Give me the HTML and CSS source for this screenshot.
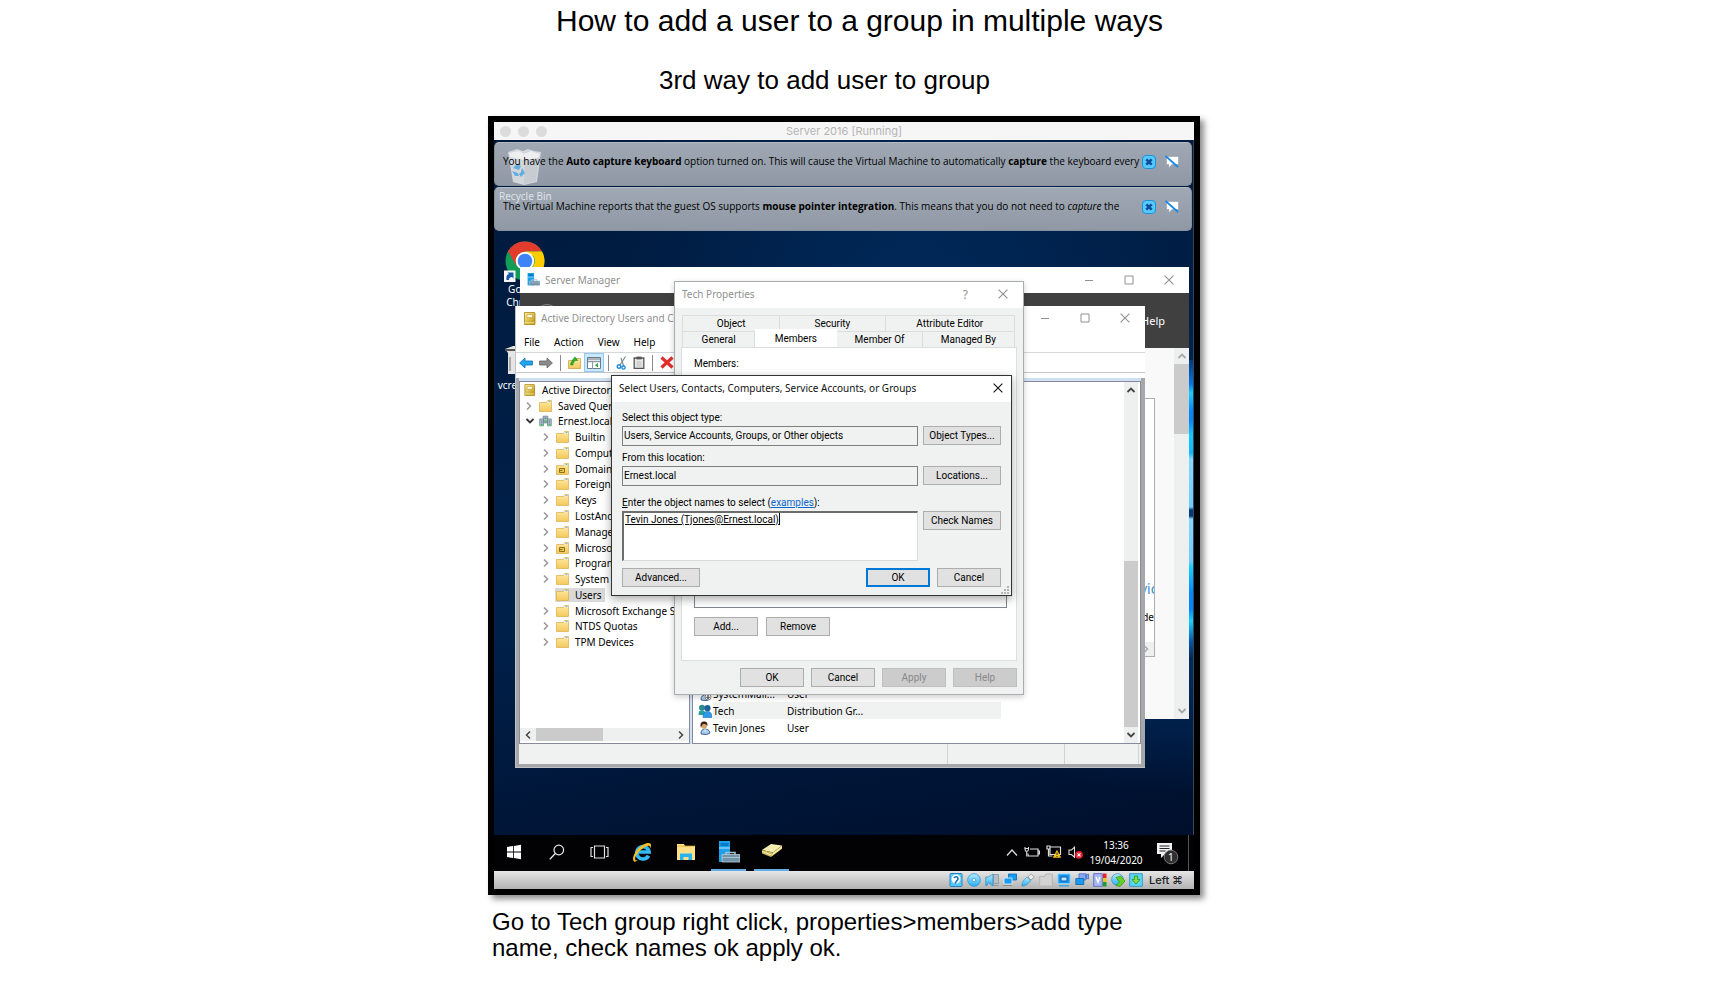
FILE: index.html
```html
<!DOCTYPE html>
<html lang="en">
<head>
<meta charset="utf-8">
<title>How to add a user to a group in multiple ways</title>
<link rel="stylesheet" href="styles.css">
</head>
<body>
<svg class="defs" aria-hidden="true">
  <linearGradient id="gold" x1="0" y1="0" x2="0" y2="1"><stop offset="0" stop-color="#ffe9a0"/><stop offset="1" stop-color="#f3c95c"/></linearGradient>
  <linearGradient id="book" x1="0" y1="0" x2="1" y2="1"><stop offset="0" stop-color="#fff3a0"/><stop offset="1" stop-color="#b58c06"/></linearGradient>
  <linearGradient id="aqua" x1="0" y1="0" x2="0" y2="1"><stop offset="0" stop-color="#b8ecff"/><stop offset="1" stop-color="#25aef5"/></linearGradient>
  <symbol id="folder" viewBox="0 0 13 12"><path d="M.5 2.5h7l1-2h4v11H.5z" fill="url(#gold)" stroke="#d9ac4a" stroke-width=".7"/><path d="M8.5 1h3.6v1.4H8.5z" fill="#fff"/><path d="M9.5 1.1h2v1h-2z" fill="#58a8d8"/></symbol>
  <symbol id="ou" viewBox="0 0 13 12"><use href="#folder"/><path d="M3.5 5.5h5v4h-5zM3.5 7.5h3" fill="#e9c75a" stroke="#8d7216"/></symbol>
  <symbol id="console" viewBox="0 0 12 13"><path d="M1 .5h10l.5 1v11H1z" fill="url(#book)" stroke="#a88413" stroke-width=".8"/><path d="M3.400 2.600h5.700v3H3.400z" fill="#fffbe0" stroke="#b89b30" stroke-width=".6"/><path d="M1 10.800h10" stroke="#f6e283"/></symbol>
  <symbol id="right" viewBox="0 0 8 10"><path d="M2 1.5 5.5 5 2 8.5" fill="none" stroke="currentColor" stroke-width="1.5"/></symbol>
  <symbol id="down" viewBox="0 0 10 8"><path d="M1.5 2 5 5.5 8.5 2" fill="none" stroke="currentColor" stroke-width="1.8"/></symbol>
  <symbol id="cross" viewBox="0 0 10 10"><path d="m.6.6 8.8 8.8M9.4.6.6 9.4" fill="none" stroke="currentColor" stroke-width="1.1"/></symbol>
  <symbol id="box" viewBox="0 0 10 10"><path d="M1 1h8v8H1z" fill="none" stroke="currentColor"/></symbol>
  <symbol id="min" viewBox="0 0 10 10"><path d="M1 5.5h8" stroke="currentColor"/></symbol>
  <symbol id="domain" viewBox="0 0 14 12"><path d="M4.5.8h5V7h-5z" fill="#a9bcc8" stroke="#62798a" stroke-width=".8"/><path d="M.8 3.8h4v7.4h-4zM9.2 3.8h4v7.4h-4z" fill="#b9cad5" stroke="#62798a" stroke-width=".8"/><path d="M5.2 8h3.6M1.8 6h2M1.8 8h2M10.2 6h2M10.2 8h2M5.8 3h2.4" stroke="#496273" stroke-width=".8"/><path d="M2 10h2M10.3 10h2M6 6.2h2" stroke="#1ed52c" stroke-width="1.4"/></symbol>
  <symbol id="server" viewBox="0 0 22 22"><path d="M1 0h11v21H1z" fill="#1ba0ea"/><path d="M2.5 2h8v3h-8z" fill="#0679c9"/><path d="M1 7h11" stroke="#bfe6ff"/><path d="M8 14v-2.5h9V14" fill="none" stroke="#a9bfcd" stroke-width="1.6"/><path d="M4 13.5h18V21H4z" fill="#7194a9" stroke="#b8ccd8" stroke-width=".8"/><path d="M4 16.5h18" stroke="#b8ccd8" stroke-width=".8"/></symbol>
  <symbol id="person" viewBox="0 0 14 15"><path d="M3 14c-.8-4 1.5-5.2 4-5.2s5.5 1 5 4.4L8.500 14.500z" fill="#a9cdf0" stroke="#2e537f"/><circle cx="6" cy="5" r="3.2" fill="#d9a271"/><path d="M2.500 7C1.300 2 3.500.6 6 .6s4.200 1.600 3.500 4.400c-1.200-1.500-3-1.800-4.800-1.700z" fill="#3b2210"/><path d="m6 9 1 2.500L8.500 9z" fill="#fff"/></symbol>
  <symbol id="group" viewBox="0 0 14 14"><path d="M.5 11c0-4 1.200-4.500 3.600-4.500S8 8 8 11z" fill="#27a0a0"/><circle cx="4" cy="3.700" r="3" fill="#2c8a92"/><circle cx="9.500" cy="4.200" r="3.100" fill="#1b6398"/><path d="M5 13.500c0-4.500 1.800-6 4.500-6s4.400 1.500 4.400 6z" fill="#2f9be8" stroke="#1c6cb4" stroke-width=".6"/></symbol>
</svg>
<main class="slide">
  <h1>How to add a user to a group in multiple ways</h1>
  <h2>3rd way to add user to group</h2>

  <section class="vm" aria-label="Virtual machine">
    <header class="mac-bar">
      <span class="lights"><i></i><i></i><i></i></span>
      <span>Server 2016 [Running]</span>
      <span></span>
    </header>

    <div class="desktop">
      <div class="glow"></div>
      <div class="notices">
        <div class="notice">
          <p>You have the <b>Auto capture keyboard</b> option turned on. This will cause the Virtual Machine to automatically <b>capture</b> the keyboard every</p>
          <button class="n-btn" aria-label="Close"><svg viewBox="0 0 14 14"><rect x=".5" y=".5" width="13" height="13" rx="3.500" fill="#57c9fb" stroke="#1d91da"/><path d="m4.300 4.300 5.400 5.400m0-5.400L4.300 9.700" stroke="#0c4d9c" stroke-width="2.600"/></svg></button>
          <button class="n-btn" aria-label="Do not show again"><svg viewBox="0 0 14 14"><path d="M1.500 1.500h12v8H7L3.500 13l.5-3.500H1.500z" fill="#fff" stroke="#8c949c" stroke-width=".5"/><path d="m.5 1 12.500 11" stroke="#1489e8" stroke-width="1.800"/></svg></button>
        </div>
        <div class="notice">
          <p>The Virtual Machine reports that the guest OS supports <b>mouse pointer integration</b>. This means that you do not need to <em>capture</em> the</p>
          <button class="n-btn" aria-label="Close"><svg viewBox="0 0 14 14"><rect x=".5" y=".5" width="13" height="13" rx="3.500" fill="#57c9fb" stroke="#1d91da"/><path d="m4.300 4.300 5.400 5.400m0-5.400L4.300 9.700" stroke="#0c4d9c" stroke-width="2.600"/></svg></button>
          <button class="n-btn" aria-label="Do not show again"><svg viewBox="0 0 14 14"><path d="M1.500 1.500h12v8H7L3.500 13l.5-3.500H1.500z" fill="#fff" stroke="#8c949c" stroke-width=".5"/><path d="m.5 1 12.500 11" stroke="#1489e8" stroke-width="1.800"/></svg></button>
        </div>
      </div>

      <div class="icon bin"><svg viewBox="0 0 36 38" width="36" height="38"><path d="M1 4 10 1l6 2 5-2 6 2 7 1-4 30-13 3-11-3z" fill="#d3d7dc"/><path d="M2 5 12 3l5 3 7-3 9 3-2 4-14 2L3 9z" fill="#eceef0"/><path d="m18 12-1 24 12-3 3-23z" fill="#c2c7cd" opacity=".7"/><path d="m6 20 4-4 4 2-2 4-3-1zM15 20l3 5-4 4-2-3 2-2zM5 23l3 5 4 0-1-3z" fill="#64aee0"/></svg><span>Recycle Bin</span></div>
      <div class="icon chrome"><svg viewBox="0 0 42 42" width="42" height="42"><circle cx="21" cy="20" r="19.500" fill="#0f9d58"/><path d="M4.100 10.300A19.500 19.500 0 0 1 38 10.500H21l-8.500 14.300z" fill="#e33b2e"/><path d="M38 10.500A19.500 19.500 0 0 1 21 39.500l8.500-14.700a9.500 9.500 0 0 0 0-9.500L21 10.500z" fill="#ffcd00"/><circle cx="21" cy="20" r="9.300" fill="#fff"/><circle cx="21" cy="20" r="7.300" fill="#3f83f8"/><path d="M0 29.500h11.500V41H0z" fill="#f6f8fa"/><path d="M2.500 39c-.5-4 .5-5.500 2.500-6L3.500 31.500h6v6L8 36c-2 0-3 1-3 3z" fill="#1959a8"/></svg><span>Google<br>Chrome</span></div>
      <div class="icon vcre"><svg viewBox="0 0 30 30" width="30" height="30"><path d="m0 4 8-3h20v5l-8 2v21H3V8z" fill="#e5e5e5"/><path d="M0 4h12v2H0z" fill="#555"/><path d="M4 12h2v14H4z" fill="#aaa"/></svg><span>vcredist</span></div>

      <section class="win sm" aria-label="Server Manager">
        <header class="cap"><svg class="i12"><use href="#server"/></svg><span class="t">Server Manager</span><span class="ctl"><svg><use href="#min"/></svg><svg><use href="#box"/></svg><svg><use href="#cross"/></svg></span></header>
        <div class="sm-head"><i class="back"></i><span>Help</span></div>
        <div class="sm-body">
          <div class="sm-panel"><span class="vic">Services</span><span class="de">BPA results mode</span><span class="sm-arrow"><svg width="8" height="10"><use href="#right"/></svg></span></div>
          <div class="vscroll pale"><svg class="up"><use href="#down"/></svg><i class="t1"></i><svg><use href="#down"/></svg></div>
        </div>
      </section>

      <section class="win ad" aria-label="Active Directory Users and Computers">
        <header class="cap"><svg class="i12"><use href="#console"/></svg><span class="t">Active Directory Users and Computers</span><span class="ctl"><svg><use href="#min"/></svg><svg><use href="#box"/></svg><svg><use href="#cross"/></svg></span></header>
        <nav class="menu"><button>File</button><button>Action</button><button>View</button><button>Help</button></nav>
        <div class="tools">
          <svg width="14" height="12" viewBox="0 0 14 12"><path d="m.6 6 5.400-5v3h7.400v4H6v3z" fill="#22a4ee" stroke="#0b6fb8" stroke-width=".8"/></svg>
          <svg width="14" height="12" viewBox="0 0 14 12"><path d="m13.400 6-5.400-5v3H.6v4H8v3z" fill="#8b8b8b" stroke="#666" stroke-width=".8"/></svg>
          <i class="sep"></i>
          <svg width="13" height="13" viewBox="0 0 13 13"><path d="M.5 4.500h7l1-2h4v10H.5z" fill="url(#gold)" stroke="#c79b38" stroke-width=".7"/><path d="M2.500 9c0-3 1.500-4.500 3-4.500H4L7 .8l3 3.700H8C6 5 5.500 6.500 5 9z" fill="#2cb52c" stroke="#14761a" stroke-width=".4"/></svg>
          <span class="on"><svg width="14" height="12" viewBox="0 0 14 12"><path d="M.5.5h13v11H.5z" fill="#fff" stroke="#6b7d8b"/><path d="M1 2h12M1 4.500h12" stroke="#8c9ba7" stroke-width="1.400"/><path d="M5.500 5v7" stroke="#8c9ba7"/><path d="m11 6-3 2.200 3 2.200z" fill="#1da63a"/></svg></span>
          <i class="sep"></i>
          <svg width="11" height="14" viewBox="0 0 11 14"><path d="M9.500.5 4 9M5 2l3 9" stroke="#7e8b95" stroke-width="1.200"/><circle cx="3" cy="10.500" r="1.800" fill="none" stroke="#1c8ade" stroke-width="1.400"/><circle cx="7.500" cy="11.500" r="1.600" fill="none" stroke="#1c8ade" stroke-width="1.400"/></svg>
          <svg width="12" height="13" viewBox="0 0 12 13"><path d="M1.200 2h9.600v10.300H1.200z" fill="#e9e9e9" stroke="#555" stroke-width="1.300"/><path d="M3.500.6h5v2.800h-5z" fill="#555"/><path d="M3.500 6h5M3.500 8h5M3.500 10h5" stroke="#bbb"/></svg>
          <i class="sep"></i>
          <svg width="14" height="13" viewBox="0 0 14 13"><path d="m1.500 1.500 11 10m0-10-11 10" stroke="#e02e2e" stroke-width="3.200"/></svg>
        </div>
        <div class="ad-body">
          <div class="tree">
            <ul>
              <li class="l0"><svg class="ic"><use href="#console"/></svg>Active Directory Users</li>
              <li class="l1"><svg class="ch"><use href="#right"/></svg><svg class="ic"><use href="#folder"/></svg>Saved Queries</li>
              <li class="l1"><svg class="ch open"><use href="#down"/></svg><svg class="ic"><use href="#domain"/></svg>Ernest.local</li>
              <li><svg class="ch"><use href="#right"/></svg><svg class="ic"><use href="#folder"/></svg>Builtin</li>
              <li><svg class="ch"><use href="#right"/></svg><svg class="ic"><use href="#folder"/></svg>Computers</li>
              <li><svg class="ch"><use href="#right"/></svg><svg class="ic"><use href="#ou"/></svg>Domain Controllers</li>
              <li><svg class="ch"><use href="#right"/></svg><svg class="ic"><use href="#folder"/></svg>ForeignSecurity</li>
              <li><svg class="ch"><use href="#right"/></svg><svg class="ic"><use href="#folder"/></svg>Keys</li>
              <li><svg class="ch"><use href="#right"/></svg><svg class="ic"><use href="#folder"/></svg>LostAndFound</li>
              <li><svg class="ch"><use href="#right"/></svg><svg class="ic"><use href="#folder"/></svg>Managed Service</li>
              <li><svg class="ch"><use href="#right"/></svg><svg class="ic"><use href="#ou"/></svg>Microsoft Exchange</li>
              <li><svg class="ch"><use href="#right"/></svg><svg class="ic"><use href="#folder"/></svg>Program Data</li>
              <li><svg class="ch"><use href="#right"/></svg><svg class="ic"><use href="#folder"/></svg>System</li>
              <li><i class="ch"></i><span class="sel"><svg class="ic"><use href="#folder"/></svg>Users</span></li>
              <li><svg class="ch"><use href="#right"/></svg><svg class="ic"><use href="#folder"/></svg>Microsoft Exchange System</li>
              <li><svg class="ch"><use href="#right"/></svg><svg class="ic"><use href="#folder"/></svg>NTDS Quotas</li>
              <li><svg class="ch"><use href="#right"/></svg><svg class="ic"><use href="#folder"/></svg>TPM Devices</li>
            </ul>
            <div class="hscroll"><svg class="left"><use href="#right"/></svg><i></i><svg><use href="#right"/></svg></div>
          </div>
          <div class="list">
            <div class="rows">
              <table>
                <tr><td><svg><use href="#person"/><circle cx="10" cy="10" r="3" fill="#fff" stroke="#444" stroke-width=".6"/><path d="M10 8v3.500M8.500 10.100l1.500 1.500 1.500-1.500" fill="none" stroke="#222"/></svg></td><td>SystemMail...</td><td>User</td></tr>
                <tr class="hot"><td><svg><use href="#group"/></svg></td><td>Tech</td><td>Distribution Gr...</td></tr>
                <tr><td><svg><use href="#person"/></svg></td><td>Tevin Jones</td><td>User</td></tr>
              </table>
            </div>
            <div class="vscroll dark"><svg class="up"><use href="#down"/></svg><i class="t2"></i><svg><use href="#down"/></svg></div>
          </div>
        </div>
        <footer class="ad-status"><i></i><i></i><i></i></footer>
      </section>

      <section class="win tech" aria-label="Tech Properties">
        <header class="cap"><span class="t">Tech Properties</span><span class="ctl"><b>?</b><svg><use href="#cross"/></svg></span></header>
        <div class="tabs" role="tablist">
          <div class="tabrow r1"><button role="tab">Object</button><button role="tab">Security</button><button role="tab">Attribute Editor</button></div>
          <div class="tabrow r2"><button role="tab">General</button><button role="tab" class="cur" aria-selected="true">Members</button><button role="tab">Member Of</button><button role="tab">Managed By</button></div>
        </div>
        <div class="page">
          <span>Members:</span>
          <div class="mlist"></div>
          <div class="btns"><button class="b">Add...</button><button class="b">Remove</button></div>
        </div>
        <footer class="btns end"><button class="b">OK</button><button class="b">Cancel</button><button class="b" disabled>Apply</button><button class="b" disabled>Help</button></footer>
      </section>

      <section class="win pick" role="dialog" aria-label="Select Users, Contacts, Computers, Service Accounts, or Groups">
        <header class="cap"><span class="t">Select Users, Contacts, Computers, Service Accounts, or Groups</span><span class="ctl"><svg><use href="#cross"/></svg></span></header>
        <div class="form">
          <label for="type">Select this object type:</label>
          <input id="type" readonly value="Users, Service Accounts, Groups, or Other objects"><button class="b">Object Types...</button>
          <label for="loc">From this location:</label>
          <input id="loc" readonly value="Ernest.local"><button class="b">Locations...</button>
          <label for="names" class="nl"><u>E</u>nter the object names to select (<a href="#">examples</a>):</label>
          <textarea id="names" spellcheck="false">Tevin Jones (Tjones@Ernest.local)</textarea><button class="b">Check Names</button>
        </div>
        <i class="caret"></i>
        <footer class="pick-foot"><button class="b wide">Advanced...</button><span></span><button class="b def">OK</button><button class="b">Cancel</button></footer>
        <svg class="grip" viewBox="0 0 8 8"><path d="M6 0h2v2H6zM3 3h2v2H3zM6 3h2v2H6zM0 6h2v2H0zM3 6h2v2H3zM6 6h2v2H6z" fill="#b5b5b5"/></svg>
      </section>
    </div>

    <div class="taskbar">
      <button class="tb" aria-label="Start"><svg width="16" height="16" viewBox="0 0 16 16"><path d="m1 3 6-1v5.600H1zm6.800-1.100L15 .8v6.800H7.800zM1 8.400h6V14l-6-1zm6.800 0H15v6.800l-7.200-1.100z" fill="#fff"/></svg></button>
      <button class="tb" aria-label="Search"><svg width="16" height="16" viewBox="0 0 16 16"><circle cx="9.800" cy="6" r="4.800" fill="none" stroke="#e8e8e8" stroke-width="1.200"/><path d="m6.300 9.500-5.500 5.700" stroke="#e8e8e8" stroke-width="1.300"/></svg></button>
      <button class="tb" aria-label="Task View"><svg width="19" height="14" viewBox="0 0 19 14"><path d="M4.500 1h10v12h-10zM3 2.500H1v9h2m13-9h2v9h-2" fill="none" stroke="#e0e0e0" stroke-width="1.200"/></svg></button>
      <button class="tb" aria-label="Internet Explorer"><svg width="21" height="21" viewBox="0 0 21 21"><path d="M16.500 13.600a6.200 6.200 0 1 1 .6-3.600H6.500" fill="none" stroke="#35b9f2" stroke-width="3.600"/><path d="M2 19.500C-1.500 16 5 5.500 12 2.200c4-2 7.500-1.700 7 1.500 0 1-.5 2-1 3 .5-2.600-.7-3.700-3.700-2.400C8 7.500 2.500 14 3.200 17.500c.3 1 1.500 1 2.700.6-1.500 1.300-3 2-3.900 1.400z" fill="#f5bf25"/></svg></button>
      <button class="tb" aria-label="File Explorer"><svg width="20" height="18" viewBox="0 0 20 18"><path d="M1 1h7l1 2h10v14H1z" fill="#ffe08a"/><path d="M1 3.200h18" stroke="#e9b73b"/><path d="M4 17v-6.500h12V17h-3.500v-3h-5v3z" fill="#29b3ee"/></svg></button>
      <button class="tb run" aria-label="Server Manager"><svg width="22" height="22"><use href="#server"/></svg></button>
      <button class="tb run" aria-label="Active Directory"><svg class="bk" width="22" height="15" viewBox="0 0 22 15"><path d="m1 7 9-6 11 1.500L12 9.500z" fill="#f5eeb0"/><path d="M1 7v3.500l9 3.500 2-4.500z" fill="#cdbb55"/><path d="m12 9.500 9-7v3.200L10 14z" fill="#e8d873"/><path d="m1.500 8.500 9 3.500L20.500 4.500" fill="none" stroke="#fffbe0" stroke-width=".8"/></svg></button>
      <div class="tray">
        <svg width="12" height="9" viewBox="0 0 12 9"><path d="M1 7.500 6 2l5 5.500" fill="none" stroke="#ddd" stroke-width="1.300"/></svg>
        <svg width="16" height="12" viewBox="0 0 16 12"><path d="M6 3h8v7H4V7.500M14 5h1.400v3H14" fill="none" stroke="#ddd" stroke-width="1.200"/><path d="M1 1v2.500c0 2.500 3.500 2.500 3.500 0V1M1 2.500h3.500M2.700 5v5.500" fill="none" stroke="#ddd" stroke-width="1.100"/></svg>
        <svg width="16" height="14" viewBox="0 0 16 14"><path d="M4 2h10.500v7.500H4zM1 1h3v3H1zM2.500 4v7h4" fill="none" stroke="#ddd" stroke-width="1.200"/><path d="m11 4.800 4.200 8H6.800z" fill="#f8c21c"/><path d="M11 7.500v2.500m0 1v1" stroke="#333" stroke-width="1.100"/></svg>
        <svg width="15" height="13" viewBox="0 0 15 13"><path d="M1 4h2.500l3-2.800v10L3.500 8.500H1z" fill="none" stroke="#ddd" stroke-width="1.100"/><circle cx="11" cy="8.800" r="3.900" fill="#e41f2f"/><path d="m9.500 7.300 3 3m0-3-3 3" stroke="#fff" stroke-width="1.100"/></svg>
      </div>
      <time class="clock">13:36<br>19/04/2020</time>
      <svg class="note" width="23" height="23" viewBox="0 0 23 23"><path d="M1 1h15v11H9l-4 4v-4H1z" fill="#f2f2f2"/><path d="M3.500 4h10M3.500 6.500h10M3.500 9h6" stroke="#222"/><circle cx="15" cy="15" r="6.800" fill="#2f2f2f" stroke="#777"/><text x="12" y="19" class="num">1</text></svg>
      <i class="peek"></i>
    </div>

    <footer class="vbox">
      <svg viewBox="0 0 14 14"><rect x="1" y=".5" width="12" height="13" rx="1" fill="#59c8fa" stroke="#2384c4"/><circle cx="7" cy="6" r="4.500" fill="#fff"/><path d="M5 5c1-2 4-1.500 4 .5S7 8 6 10.500" fill="none" stroke="#1672b8" stroke-width="1.600"/></svg>
      <svg viewBox="0 0 14 14"><circle cx="7" cy="7" r="6.300" fill="url(#aqua)" stroke="#2b93cf" stroke-width=".8"/><circle cx="7" cy="7" r="1.800" fill="#e8f8ff" stroke="#2b93cf" stroke-width=".7"/></svg>
      <svg viewBox="0 0 14 14"><path d="M8.500 1.500h5v9h-5zM7.500 12.500h6" fill="#b8bfc5" stroke="#8a949b" stroke-width=".8"/><path d="M.8 4h2.500L8 1v12L3.300 9.500 2 12.500H.8z" fill="url(#aqua)" stroke="#3b8cc0" stroke-width=".8"/></svg>
      <svg viewBox="0 0 14 14"><path d="M5.500 1h8v6h-8z" fill="#189bf0" stroke="#0c64b0" stroke-width=".8"/><path d="M1 5h8v6H1z" fill="#189bf0" stroke="#e5f5ff" stroke-width=".8"/><path d="M0 12.500h9" stroke="#888"/></svg>
      <svg viewBox="0 0 14 14"><path d="M1 13c0-4 1-5 5-9l4 3.500c-4 4-5 5.500-9 5.500z" fill="url(#aqua)" stroke="#3d86b0" stroke-width=".7"/><path d="m7 4 3-3.200L13.200 4 10 7z" fill="#eee" stroke="#888" stroke-width=".7"/></svg>
      <svg viewBox="0 0 14 14"><path d="M.7 3.500 5.500 3.500 7 1h6.300v12H.7z" fill="#d3d3d3" stroke="#b5b5b5"/></svg>
      <svg viewBox="0 0 14 14"><path d="M1 1h12v9.500H1z" fill="#1693ee" stroke="#7dd3ff"/><path d="M4 4h6v4H4z" fill="#bce9ff" stroke="#0a5fb0"/><path d="M2 12.800h10" stroke="#48a8d8" stroke-width="1.600"/></svg>
      <svg viewBox="0 0 14 14"><path d="M4 .8h7V7H4zM11 2l2.500-1v5L11 5z" fill="#86a9f2" stroke="#3e60b5" stroke-width=".7"/><path d="M.8 5.500h8v6h-8z" fill="#189bf0" stroke="#0c64b0" stroke-width=".8"/></svg>
      <svg viewBox="0 0 14 14"><path d="M.7.7h8.600v12.600H.7z" fill="#a7b8f7" stroke="#6271c9"/><path d="m3 4 2 5 2-5" fill="none" stroke="#fff" stroke-width="1.400"/><path d="M10 .5h3.500v4.500H10z" fill="#e22"/><path d="M10 5h3.500v4H10z" fill="#f2c21c"/><path d="M10 9h3.500v4.500H10z" fill="#1b9e2f"/></svg>
      <svg viewBox="0 0 14 14"><circle cx="6.500" cy="6.500" r="5.900" fill="url(#aqua)" stroke="#3c85aa" stroke-width=".7"/><path d="m5 4.500 4.500-1.500L14 8l-5 5.500-4-1 3.500-3.500z" fill="#62d322" stroke="#2e8b12" stroke-width=".7"/></svg>
      <svg viewBox="0 0 14 14"><path d="M.7.7h12.600v12.600H.7z" fill="#5bd5f8" stroke="#3399c5"/><path d="M5.500 3h3v3.500H11L7 11 3 6.500h2.500z" fill="#8be03c" stroke="#2f8e1e" stroke-width=".8"/></svg>
      <span>Left ⌘</span>
    </footer>
  </section>

  <p class="caption">Go to Tech group right click, properties&gt;members&gt;add type name, check names ok apply ok.</p>
</main>
</body>
</html>
```

FILE: styles.css
```css
* { box-sizing: border-box; }
body { margin: 0; background: #fff; color: #000; font-family: "Liberation Sans", Arial, sans-serif; }
button, input, textarea { font: inherit; color: inherit; margin: 0; }
svg { display: block; flex: none; }
.defs { position: absolute; width: 0; height: 0; }

.slide { max-width: 760px; margin: 0 auto; }
h1, h2, p { margin: 0; font-weight: 400; }
h1 { padding: 4px 0 0 68px; font-size: 30px; line-height: 34px; }
h2 { padding: 27px 0 0 171px; font-size: 26px; line-height: 30px; }
.caption { max-width: 680px; padding: 14px 0 0 4px; font-size: 24px; line-height: 26px; }

/* Virtual machine frame */
.vm { max-width: 712px; margin-top: 21px; border: 6px solid #000; box-shadow: 4px 4px 6px rgba(0,0,0,.45); font-family: "Noto Sans", sans-serif; font-size: 10px; }
.mac-bar { display: grid; grid-template-columns: 1fr auto 1fr; align-items: center; height: 18px; padding: 0 6px; background: #f6f6f6; color: #b4b4b4; font-family: Inter, sans-serif; font-size: 11px; }
.lights { display: flex; gap: 7px; }
.lights i { width: 11px; height: 11px; border-radius: 50%; background: #dcdcdc; }

.desktop { position: relative; height: 695px; overflow: hidden; border-right: 1px solid #3b4654; background: radial-gradient(ellipse at 100% 60%, #003a78 0, transparent 40%), radial-gradient(ellipse at 60% 25%, #00295a 0, transparent 50%), linear-gradient(170deg, #001a3d, #00204a 60%, #000f2c); }
.glow { position: absolute; right: 0; top: 220px; width: 6px; height: 300px; background: linear-gradient(#003a7c, #0076e8 8%, #19cfff 11%, #0086ff 17%, #0086ff 20%, #12c9ff 25%, #0cb8ff 31%, #84d8ff 33%, #6fcaff 49%, #003a7c 50%, #003a7c 52%, #84d8ff 53%, #6fcaff 67%, #19cfff 69%, #0086ff 78%, #0086ff 83%, #19cfff 87%, #0054a8 94%, #00234e); }
.notices { display: grid; grid-template-columns: minmax(0, 1fr); gap: 1px; padding: 2px 1px 0 0; }
.notice { display: flex; align-items: flex-start; height: 44px; padding: 11px 12px 0 8px; border-radius: 5px; background: linear-gradient(#9fa8b3, #8f98a4); border: 1px solid #87919d; border-top-color: #b3bac3; }
.notice p { position: relative; z-index: 3; flex: 1; min-width: 0; white-space: nowrap; font-family: "Open Sans", sans-serif; font-weight: 500; font-size: 10px; line-height: 14px; }
.notice b { font-weight: 700; }
.n-btn { margin-left: 9px; padding: 1px 0 0; border: 0; background: none; }
.n-btn svg { width: 14px; height: 14px; }

.icon { position: absolute; display: grid; justify-items: center; color: #fff; line-height: 13px; text-align: center; }
.bin { left: 5px; top: 8px; color: #dfe3e8; gap: 4px; z-index: 2; }
.chrome { left: 10px; top: 101px; }
.vcre { left: 3px; top: 205px; gap: 4px; }
.vcre svg { margin-left: 8px; }

/* Windows */
.win { position: absolute; display: flex; flex-direction: column; background: #fff; }
.cap { display: flex; align-items: center; height: 26px; padding-bottom: 2px; color: #909090; background: #fff; flex: none; }
.cap .t { flex: 1; white-space: nowrap; }
.ctl { display: flex; align-items: center; gap: 30px; }
.ctl svg { width: 10px; height: 10px; }
.ctl b { font-weight: 400; font-size: 12px; }
.i12 { width: 13px; height: 13px; }

.sm { left: 26px; top: 127px; width: 669px; height: 452px; }
.sm .cap { padding: 0 15px 1px 7px; gap: 5px; }
.sm-head { display: flex; justify-content: flex-end; align-items: center; height: 55px; padding-right: 24px; background: #404040; color: #fff; overflow: hidden; position: relative; font-size: 11px; }
.back { position: absolute; left: 15px; top: 11px; width: 24px; height: 24px; border: 1px solid #888; border-radius: 50%; }
.sm-body { display: flex; flex: 1; background: #f8f9f8; }
.sm-panel { flex: 1; display: flex; flex-direction: column; align-items: flex-end; margin: 50px 19px 62px 0; border: 1px solid #aeaeae; background: #fff; overflow: hidden; }
.vic { margin: auto -18px 12px 0; font-size: 14px; color: #3a8ed0; }
.de { width: 13px; direction: rtl; white-space: nowrap; overflow: hidden; margin-bottom: 18px; line-height: 14px; }
.sm-arrow { padding: 2px 4px; background: #eef0ef; color: #aaa; }

.vscroll { display: flex; flex-direction: column; align-items: center; width: 14px; background: #eef0ef; color: #444; }
.vscroll svg { width: 10px; height: 8px; margin: 4px 0; }
.vscroll .up, .left { transform: rotate(180deg); }
.vscroll i { width: 100%; background: #cbcbcb; }
.pale { width: 15px; color: #a8a8a8; }
.t1 { height: 70px; margin-bottom: auto; }
.t2 { height: 166px; margin-top: auto; }

.ad { left: 21px; top: 166px; width: 630px; height: 462px; border: 1px solid #bfc3c6; border-width: 0 0 1px 1px; }
.ad .cap { padding: 0 15px 2px 7px; gap: 5px; }
.menu { display: flex; gap: 14px; height: 21px; padding-left: 8px; border-bottom: 1px solid #d5d8da; }
.menu button { padding: 0; border: 0; background: none; line-height: 18px; }
.tools { display: flex; align-items: center; gap: 6px; height: 20px; padding-left: 3px; border-bottom: 1px solid #c5c8ca; }
.sep { width: 1px; height: 16px; margin: 0 1px; background: #8b8b8b; }
.on { display: grid; place-items: center; width: 20px; height: 19px; margin: 0 -3px; background: #cce8ff; border: 1px solid #8fcaf5; }
.ad-body { display: grid; grid-template-columns: 171px 1fr; gap: 2px; flex: 1; margin-top: 5px; padding-top: 3px; min-height: 0; background: #cfe0f3; border: 3px solid #a5a7a9; border-width: 0 4px 0 3px; }
.tree, .list { min-height: 0; border: 1px solid #878b9c; background: #fff; overflow: hidden; }
.tree { display: flex; flex-direction: column; }
.tree ul { display: grid; grid-auto-rows: 1fr; height: 268px; margin: 0 0 auto; padding: 0; list-style: none; white-space: nowrap; }
.tree li { display: flex; align-items: center; padding-left: 22px; min-height: 0; line-height: 14px; }
.tree .l1 { padding-left: 5px; }
.tree .l0 { padding-left: 3px; }
.ch { width: 8px; height: 10px; margin-right: 6px; color: #989898; }
.open { width: 10px; height: 8px; margin-right: 4px; color: #333; }
.ic { width: 13px; height: 12px; margin-right: 6px; }
.sel { display: flex; align-items: center; padding-right: 3px; background: #d9d9d9; margin-left: -1px; padding-left: 1px; }
.hscroll { display: flex; align-items: center; height: 13px; margin-bottom: 2px; padding: 0 4px; background: #eef0ef; color: #444; }
.hscroll svg { width: 8px; height: 10px; }
.hscroll i { width: 67px; height: 13px; margin: 0 auto 0 4px; background: #cbcbcb; }
.list { display: flex; }
.rows { display: flex; align-items: flex-end; flex: 1; padding-bottom: 7px; }
.list .vscroll { margin-right: 2px; }
table { border-collapse: collapse; table-layout: fixed; width: 308px; }
td { height: 17px; padding: 0; line-height: 16px; white-space: nowrap; }
td:first-child { width: 20px; padding-left: 5px; }
td:nth-child(2) { width: 74px; }
td svg { width: 14px; height: 14px; }
.hot td:not(:first-child) { background: #f0f2f1; }
.ad-status { display: flex; justify-content: flex-end; height: 23px; background: #f0f2f1; border: 3px solid #a5a7a9; border-width: 0 4px 3px 3px; }
.ad-status i { border-right: 1px solid #d0d3d2; width: 117px; }
.ad-status i:last-child { width: 74px; margin-right: 2px; }

/* Classic dialog controls */
.b { display: grid; place-items: center; width: 64px; height: 19px; padding: 0; border: 1px solid #adadad; background: #e1e1e1; white-space: nowrap; }
.b:disabled { background: #ccc; border-color: #bfbfbf; color: #888; }
.btns { display: flex; gap: 7px; }
.tech, .pick { background: #f0f2f1; font-family: Roboto, "Liberation Sans", sans-serif; }
.tech .t, .pick .t, .tech .ctl { font-family: "Noto Sans", sans-serif; }

.tech { left: 180px; top: 141px; width: 350px; height: 414px; padding: 0 6px 7px; border: 1px solid #a9adb0; box-shadow: 0 2px 6px rgba(0,0,0,.2); }
.tech .cap { margin: 0 -6px; padding: 0 15px 2px 7px; }
.tabs { padding: 7px 2px 0 1px; }
.tabrow { display: grid; height: 16px; }
.tabrow button { padding: 0; border: 1px solid #dcdedd; border-width: 1px 1px 0 0; background: #f0f2f1; }
.tabrow button:first-child { border-left-width: 1px; }
.r1 { grid-template-columns: 98fr 105fr 129fr; }
.r2 { grid-template-columns: 73fr 82fr 85fr 92fr; }
.tabrow .cur { background: #fff; margin-top: -2px; border-color: #fff; }
.page { display: flex; flex-direction: column; flex: 1; gap: 9px; padding: 9px 9px 24px 12px; border: 1px solid #dcdedd; background: #fff; line-height: 14px; }
.mlist { flex: 1; border: 1px solid #828790; }
.page .btns { gap: 8px; }
.end { justify-content: flex-end; padding-top: 7px; }

.pick { left: 117px; top: 235px; width: 401px; height: 221px; border: 1px solid #333; box-shadow: 0 3px 9px rgba(0,0,0,.35); }
.pick .cap { padding: 0 8px 2px 7px; color: #111; }
.form { display: grid; grid-template-columns: 1fr 78px; column-gap: 5px; padding: 8px 10px 0; }
.form label { grid-column: 1 / -1; line-height: 14px; padding: 1px 0; }
.form input { width: 100%; min-width: 0; height: 20px; margin-bottom: 4px; padding: 0 1px 2px; border: 1px solid #7f7f7f; background: #f0f2f1; outline: 0; }
.form .b { width: 78px; }
.form .nl { padding: 6px 0 1px; }
.form textarea { width: 100%; height: 50px; padding: 0 1px; resize: none; overflow: hidden; border: 1px solid #dadada; border-top: 2px solid #6d6d6d; border-left: 2px solid #6d6d6d; background: #fff; text-decoration: underline; outline: 0; line-height: 13px; }
.caret { position: absolute; left: 167px; top: 137px; width: 1px; height: 12px; background: #000; }
a { color: #0a66cc; }
.pick-foot { display: grid; grid-template-columns: 78px 1fr 64px 64px; column-gap: 7px; padding: 7px 10px 0; }
.pick-foot .wide { width: 78px; }
.def { border: 2px solid #0078d7; }
.grip { position: absolute; right: 2px; bottom: 1px; width: 8px; height: 8px; }

/* Guest taskbar and host status bar */
.taskbar { display: flex; align-items: stretch; height: 36px; padding: 0 5px 0 2px; background: #020204; color: #fff; }
.tb { display: grid; place-items: center; width: 35px; margin-right: 8px; padding: 0 0 2px; border: 0; background: none; }
.run { padding: 0; border-bottom: 2px solid #62aee8; }
.bk { margin-bottom: 3px; }
.tray { display: flex; align-items: center; gap: 6px; margin-left: auto; padding-bottom: 2px; }
.clock { align-self: center; width: 62px; margin-left: 2px; text-align: center; line-height: 15px; padding-bottom: 1px; }
.note { align-self: center; margin-left: 9px; }
.num { fill: #fff; font: 10px "Noto Sans", sans-serif; }
.peek { width: 1px; margin-left: 9px; background: #555; }
.vbox { display: flex; align-items: center; justify-content: flex-end; gap: 4px; height: 18px; padding-right: 11px; background: linear-gradient(#e6e6e6, #b2b2b2); color: #222; font: 500 11px Inter, "DejaVu Sans", sans-serif; }
.vbox svg { width: 14px; height: 14px; }
.vbox span { margin-left: 2px; }
```
